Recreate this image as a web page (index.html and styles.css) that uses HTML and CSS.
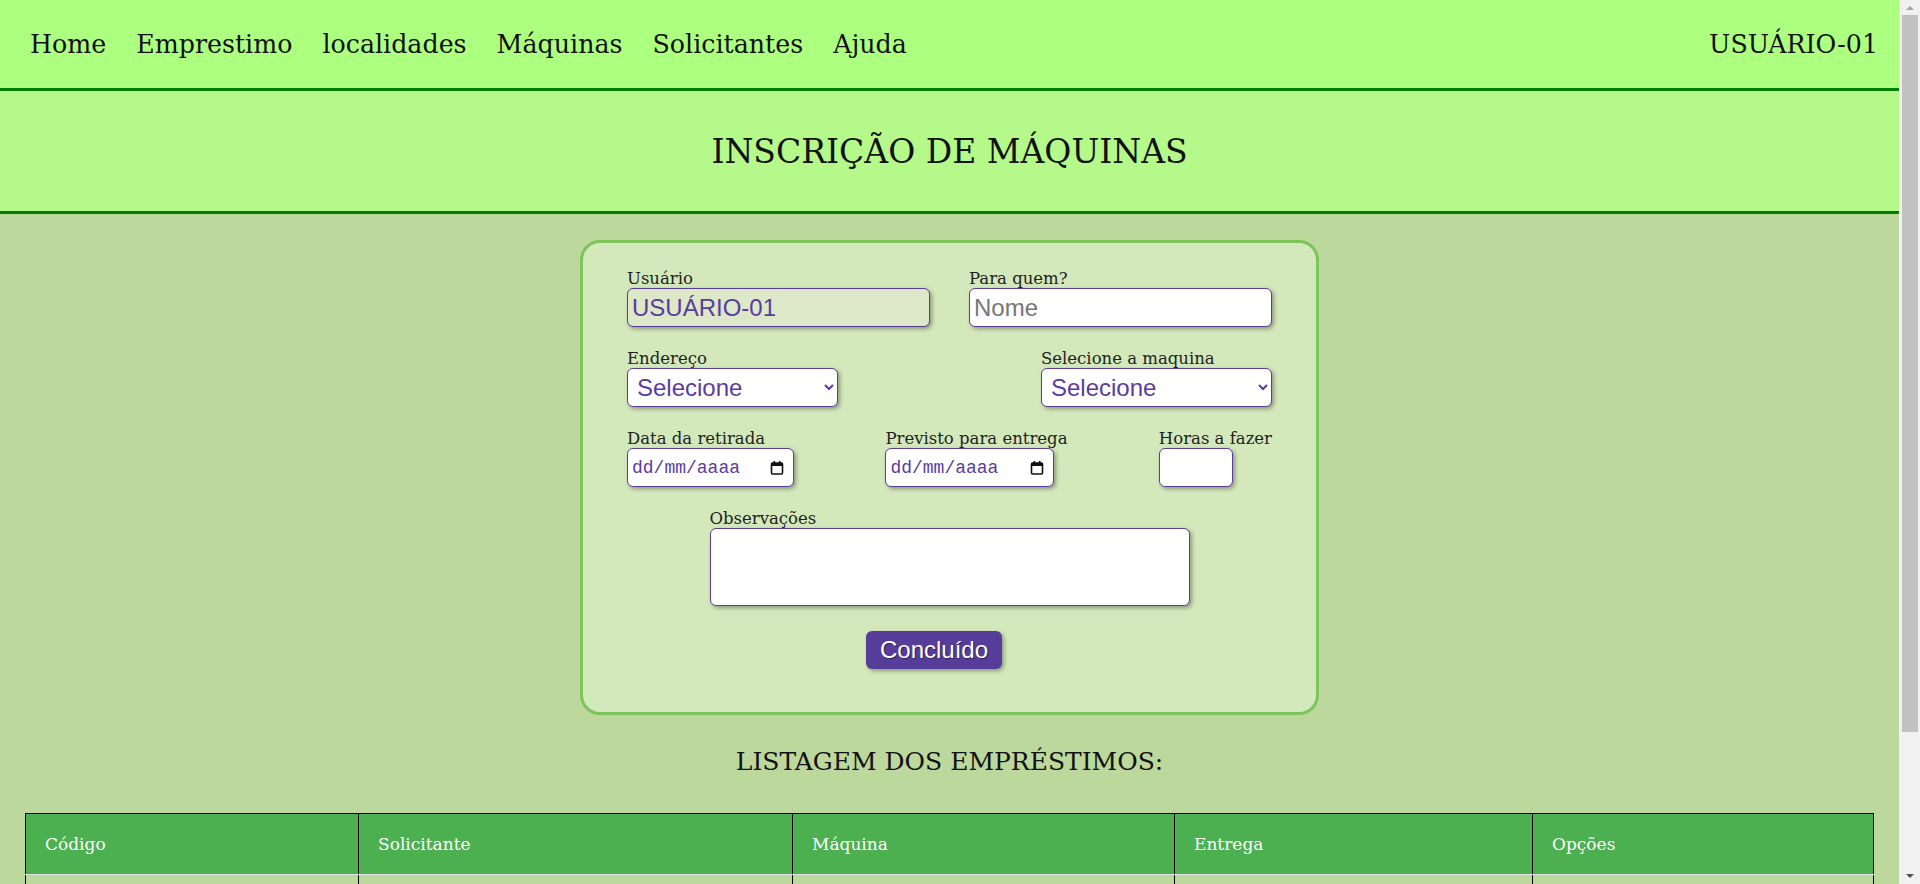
FILE: index.html
```html
<!DOCTYPE html>
<html lang="pt-BR">
<head>
<meta charset="utf-8">
<title>Inscrição de Máquinas</title>
<link rel="stylesheet" href="styles.css">
</head>
<body>
<nav class="topbar">
  <ul class="menu">
    <li><a href="#">Home</a></li>
    <li><a href="#">Emprestimo</a></li>
    <li><a href="#">localidades</a></li>
    <li><a href="#">Máquinas</a></li>
    <li><a href="#">Solicitantes</a></li>
    <li><a href="#">Ajuda</a></li>
  </ul>
  <span class="user">USUÁRIO-01</span>
</nav>
<header class="banner">
  <h1>INSCRIÇÃO DE MÁQUINAS</h1>
</header>
<main class="content">
  <form class="card">
    <div class="row">
      <div class="field">
        <label>Usuário</label>
        <input class="inp inp-wide inp-readonly" type="text" value="USUÁRIO-01" readonly>
      </div>
      <div class="field">
        <label>Para quem?</label>
        <input class="inp inp-wide" type="text" placeholder="Nome">
      </div>
    </div>
    <div class="row">
      <div class="field">
        <label>Endereço</label>
        <select class="inp sel sel-addr"><option>Selecione</option></select>
      </div>
      <div class="field">
        <label>Selecione a maquina</label>
        <select class="inp sel sel-mach"><option>Selecione</option></select>
      </div>
    </div>
    <div class="row">
      <div class="field">
        <label>Data da retirada</label>
        <div class="inp date date-a"><span class="date-text">dd/mm/aaaa</span>
          <svg class="cal" width="14" height="15" viewBox="0 0 14 15"><rect x="1.5" y="3" width="11" height="11" rx="1" fill="none" stroke="#111" stroke-width="1.6"/><rect x="1.5" y="3" width="11" height="3" fill="#111"/><rect x="3.5" y="1" width="1.6" height="3" fill="#111"/><rect x="8.9" y="1" width="1.6" height="3" fill="#111"/></svg>
        </div>
      </div>
      <div class="field">
        <label>Previsto para entrega</label>
        <div class="inp date date-b"><span class="date-text">dd/mm/aaaa</span>
          <svg class="cal" width="14" height="15" viewBox="0 0 14 15"><rect x="1.5" y="3" width="11" height="11" rx="1" fill="none" stroke="#111" stroke-width="1.6"/><rect x="1.5" y="3" width="11" height="3" fill="#111"/><rect x="3.5" y="1" width="1.6" height="3" fill="#111"/><rect x="8.9" y="1" width="1.6" height="3" fill="#111"/></svg>
        </div>
      </div>
      <div class="field">
        <label>Horas a fazer</label>
        <input class="inp inp-hours" type="text">
      </div>
    </div>
    <div class="row row-center">
      <div class="field">
        <label>Observações</label>
        <textarea class="inp obs"></textarea>
      </div>
    </div>
    <div class="actions">
      <button type="button" class="btn">Concluído</button>
    </div>
  </form>

  <h2 class="list-title">LISTAGEM DOS EMPRÉSTIMOS:</h2>

  <table class="loans">
    <thead>
      <tr>
        <th class="c1">Código</th>
        <th class="c2">Solicitante</th>
        <th class="c3">Máquina</th>
        <th class="c4">Entrega</th>
        <th class="c5">Opções</th>
      </tr>
    </thead>
    <tbody>
      <tr><td></td><td></td><td></td><td></td><td></td></tr>
      <tr><td></td><td></td><td></td><td></td><td></td></tr>
    </tbody>
  </table>
</main>
<div class="scrollbar" aria-hidden="true">
  <span class="sb-btn"><span class="sb-up"></span></span>
  <span class="sb-thumb"></span>
  <span class="sb-btn sb-btn-down"><span class="sb-down"></span></span>
</div>
</body>
</html>
```

FILE: styles.css
```css
html, body {
  margin: 0;
  padding: 0;
}
body {
  background: #bdd89c;
  font-family: "DejaVu Serif", serif;
  color: #111;
  margin-right: 21px;
}

/* window scrollbar (drawn over the right edge) */
.scrollbar {
  position: fixed;
  top: 0;
  right: 0;
  width: 21px;
  height: 100vh;
  background: #f1f1f1;
  display: flex;
  flex-direction: column;
  align-items: center;
}
.sb-btn {
  height: 15px;
  width: 21px;
  display: flex;
  align-items: center;
  justify-content: center;
}
.sb-btn-down {
  margin-top: auto;
  height: 17px;
}
.sb-up {
  width: 0;
  height: 0;
  border-left: 4px solid transparent;
  border-right: 4px solid transparent;
  border-bottom: 4px solid #a3a3a3;
}
.sb-down {
  width: 0;
  height: 0;
  border-left: 4px solid transparent;
  border-right: 4px solid transparent;
  border-top: 4px solid #505050;
}
.sb-thumb {
  width: 16px;
  height: 717px;
  background: #c1c1c1;
}

/* top navigation */
.topbar {
  height: 88px;
  background: #adff7f;
  border-bottom: 3px solid #037c03;
  display: flex;
  align-items: center;
  justify-content: space-between;
  padding: 0 21px 0 30px;
  font-size: 25.3px;
}
.menu {
  list-style: none;
  margin: 0;
  padding: 0;
  display: flex;
  gap: 30px;
}
.menu a {
  color: #111;
  text-decoration: none;
}
.user {
  color: #111;
}

/* title band */
.banner {
  height: 120px;
  background: #b4f98a;
  border-bottom: 3px solid #037c03;
  display: flex;
  align-items: center;
  justify-content: center;
}
.banner h1 {
  margin: 0;
  font-size: 33px;
  font-weight: normal;
}

/* main */
.content {
  padding: 26px 0 40px;
}
.card {
  width: 645px;
  margin: 0 auto;
  padding: 26px 44px 43px;
  background: #d4e9bb;
  border: 3px solid #7dc55b;
  border-radius: 20px;
}
.row {
  display: flex;
  justify-content: space-between;
  margin-bottom: 22px;
}
.row-center {
  justify-content: center;
  margin-bottom: 25px;
}
.field {
  display: flex;
  flex-direction: column;
  align-items: flex-start;
}
.field label {
  font-size: 16.5px;
  line-height: 19px;
  color: #222;
}
.inp {
  box-sizing: border-box;
  height: 39px;
  border: 1px solid #5a3e9b;
  border-radius: 6px;
  background: #fff;
  box-shadow: 2px 2px 4px rgba(0, 0, 0, 0.35);
  font-family: "Liberation Sans", Arial, sans-serif;
  font-size: 24px;
  color: #5a3c9e;
  padding: 0 4px;
  margin: 0;
}
.inp::placeholder {
  color: #767676;
}
.inp-wide {
  width: 303px;
}
.inp-readonly {
  background: #dce8c8;
}
.sel {
  padding: 0 5px;
}
.sel-addr {
  width: 211px;
}
.sel-mach {
  width: 231px;
}
.date {
  display: flex;
  align-items: center;
  justify-content: space-between;
  padding: 0 9px 0 4px;
}
.date-a {
  width: 167px;
}
.date-b {
  width: 169px;
}
.date-text {
  font-family: "Liberation Mono", "DejaVu Sans Mono", monospace;
  font-size: 18px;
  color: #5a3c9e;
}
.cal {
  display: block;
}
.inp-hours {
  width: 74px;
}
.obs {
  width: 480px;
  height: 78px;
  resize: none;
  display: block;
}
.actions {
  display: flex;
  justify-content: center;
  padding-right: 31px;
}
.btn {
  height: 38px;
  width: 136px;
  border: none;
  border-radius: 6px;
  background: #563d99;
  color: #fff;
  font-family: "Liberation Sans", Arial, sans-serif;
  font-size: 24px;
  text-shadow: 1px 1px 1px rgba(0, 0, 0, 0.45);
  box-shadow: 2px 2px 4px rgba(0, 0, 0, 0.35);
  padding: 0;
}

/* listing */
.list-title {
  margin: 32px 0 37px;
  text-align: center;
  font-size: 25px;
  font-weight: normal;
  line-height: 29px;
}
.loans {
  margin-left: 25px;
  width: 1848px;
  border-collapse: collapse;
  border: 1px solid #000;
  table-layout: fixed;
}
.loans th,
.loans td {
  box-sizing: border-box;
  border-left: 1px solid #000;
  border-right: 1px solid #000;
  border-bottom: 1px solid #ddd;
  text-align: left;
  padding: 0 0 0 19px;
}
.loans th {
  height: 61px;
  background: #4caf50;
  color: #fff;
  font-weight: normal;
  font-size: 17px;
}
.loans td {
  height: 70px;
}
.c1 { width: 333px; }
.c2 { width: 434px; }
.c3 { width: 382px; }
.c4 { width: 358px; }
.c5 { width: 341px; }
```
